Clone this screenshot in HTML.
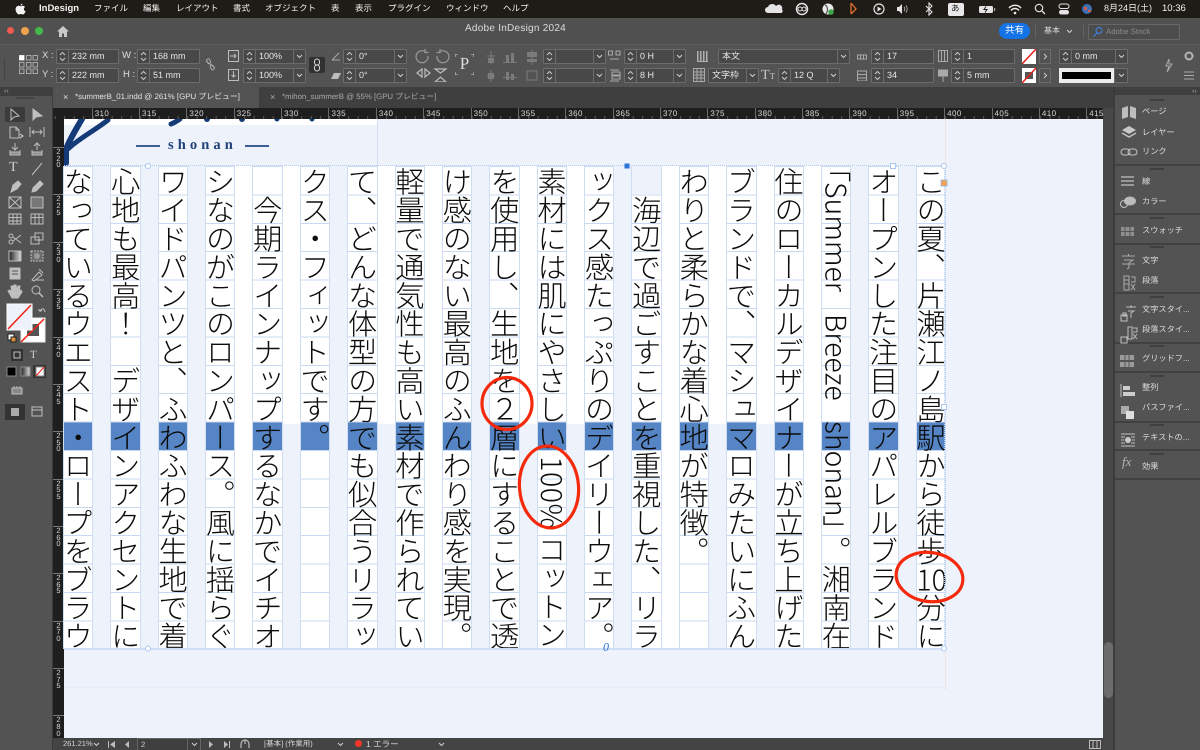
<!DOCTYPE html>
<html lang="ja"><head><meta charset="utf-8"><title>Adobe InDesign 2024</title>
<style>
html,body{margin:0;padding:0;width:1200px;height:750px;overflow:hidden;background:#535353}
body{position:relative;font-family:"Liberation Sans","Noto Sans CJK JP",sans-serif;color:#ddd;text-rendering:geometricPrecision}
.abs{position:absolute;white-space:nowrap}
#menu{position:absolute;left:0;top:0;width:1200px;height:18px;background:#1f1b17}
#menu span{position:absolute;top:0;line-height:17px;font-size:8.5px;color:#f1f1f1;white-space:nowrap}
#title{position:absolute;left:0;top:18px;width:1200px;height:26px;background:#505050}
#ctrl{position:absolute;left:0;top:44px;width:1200px;height:43px;background:#535353;border-top:1px solid #5e5e5e;box-sizing:border-box}
#tabs{position:absolute;left:0;top:87px;width:1200px;height:21px;background:#3f3f3f}
#tools{position:absolute;left:0;top:96px;width:52px;height:654px;background:#535353}
#rp{position:absolute;left:1115px;top:95px;width:85px;height:655px;background:#535353}
.f{position:absolute;height:13px;border:1px solid #6c6c6c;background:#484848;border-radius:1px;font-size:9px;line-height:13px;color:#e6e6e6;padding-left:15px;box-sizing:content-box;white-space:nowrap}
.f svg.st{position:absolute;left:0;top:0;width:11px;height:13px;border-right:1px solid #6c6c6c}
.f i{position:absolute;right:0;top:0;width:11px;height:13px;border-left:1px solid #6c6c6c}
.f i svg{position:absolute;left:2px;top:4px;width:7px;height:5px}
.lb{position:absolute;font-size:9.5px;color:#ddd;white-space:nowrap}
#rt{position:absolute;left:53px;top:108px;width:1050px;height:11px;background:#1e1e1e;overflow:hidden}
#rt .tk{position:absolute;left:0;bottom:0;width:100%;height:3px;background:repeating-linear-gradient(to right,#5a5a5a 0 1px,transparent 1px 9.474px);background-position:1.7px 0}
#rt .l{position:absolute;left:38.7px;top:0;display:flex;height:11px}
#rt .l span{flex:none;width:47.37px;box-sizing:border-box;border-left:1px solid #6a6a6a;font-size:8px;line-height:11px;padding-left:2px;color:#d8d8d8;letter-spacing:.4px}
#rl{position:absolute;left:53px;top:119px;width:11px;height:619px;background:#1e1e1e;overflow:hidden}
#rl b{position:absolute;left:0;width:11px;font-weight:400;font-size:7.5px;line-height:6.6px;color:#d8d8d8;text-align:center;border-top:1px solid #777;box-sizing:border-box;padding-top:1px}
#cv{position:absolute;left:64px;top:119px;width:1039px;height:619px;background:#eef2fb;overflow:hidden}
.g{position:absolute;background:#fff;width:19.2px}
.c{position:absolute;top:166px;width:28.4px;height:482.8px;box-sizing:border-box;writing-mode:vertical-rl;font-family:"Noto Sans CJK JP","Noto Sans CJK SC",sans-serif;font-weight:300;font-size:29.2px;letter-spacing:-.8px;line-height:28.4px;color:#0c0c0c;white-space:nowrap;padding-top:1px;
background:repeating-linear-gradient(to bottom,#c9d9f1 0 1px,transparent 1px 28.4px),linear-gradient(#5585c4,#5585c4) 0 255.6px/100% 28.4px no-repeat,#fff;
box-shadow:-1px 0 0 #cfddf3,1px 0 0 #cfddf3}
.c b{font-weight:inherit;text-combine-upright:all;font-size:28.4px;letter-spacing:0}
.c .w{position:absolute;left:0;font-size:28.4px;letter-spacing:0}
.c .x{position:absolute;left:0}
#rp .t{position:absolute;left:27px;font-size:8.2px;line-height:12px;color:#dcdcdc;white-space:nowrap}
#rp .s{position:absolute;left:0;width:85px;height:2px;background:#414141}
#rp .h{position:absolute;left:35px;width:14px;height:2px;background:#3f3f3f}
#st{position:absolute;left:53px;top:738px;width:1050px;height:12px;background:#444;font-size:7.5px;line-height:12px;color:#d6d6d6}
#st span{position:absolute;top:0;white-space:nowrap}
</style></head><body>
<svg width="0" height="0" style="position:absolute"><defs>
<symbol id="ss" viewBox="0 0 11 13"><path d="M3 5 L5.5 2.5 L8 5 M3 8 L5.5 10.5 L8 8" fill="none" stroke="#c8c8c8" stroke-width="1"/></symbol>
<symbol id="dd" viewBox="0 0 7 5"><path d="M1 1 L3.5 3.5 L6 1" fill="none" stroke="#d0d0d0" stroke-width="1"/></symbol>
</defs></svg>

<div id="menu">
<svg class="abs" style="left:15px;top:3px" width="11" height="12" viewBox="0 0 11 12"><path d="M7.5 0.5c0 1.200-1 2.200-2 2.200 0-1.200 1-2.100 2-2.200zM5.500 3.200c.8 0 1.300-.5 2.300-.5 1 0 1.800.5 2.300 1.200-1.900 1.100-1.500 3.700.5 4.400-.5 1.300-1.500 3.200-2.600 3.200-.8 0-1.100-.5-2.100-.5s-1.300.5-2.100.5C2.600 11.500.6 8.900.6 6.500.6 4 2.200 2.800 3.600 2.800c.8 0 1.400.4 1.900.4z" fill="#f2f2f2"/></svg>
<span style="left:39px;font-weight:700;font-size:9.5px">InDesign</span>
<span style="left:94px">ファイル</span><span style="left:143px">編集</span><span style="left:176px">レイアウト</span><span style="left:233px">書式</span><span style="left:265px">オブジェクト</span><span style="left:331px">表</span><span style="left:355px">表示</span><span style="left:388px">プラグイン</span><span style="left:446px">ウィンドウ</span><span style="left:503px">ヘルプ</span>
<svg class="abs" style="left:765px;top:2px" width="340" height="15" viewBox="765 2 340 15">
<path d="M768 13a3 3 0 0 1 0-6 4.500 4.500 0 0 1 8-1 3.500 3.500 0 0 1 6 3.500 2 2 0 0 1-1 3.500z" fill="#e4e4e4"/>
<circle cx="802" cy="9" r="5.500" fill="none" stroke="#e4e4e4" stroke-width="1.500"/><circle cx="800" cy="9" r="2" fill="none" stroke="#e4e4e4"/><circle cx="804" cy="9" r="2" fill="none" stroke="#e4e4e4"/>
<circle cx="828" cy="9" r="5.500" fill="#e8e8e8"/><path d="M825 5c3 1 3 6 1 9" stroke="#333" fill="none"/><circle cx="831" cy="12" r="2.800" fill="#3ea84a"/>
<path d="M851 3l5 6-5 5M851 3v11" stroke="#e0702a" fill="none" stroke-width="1.300"/>
<circle cx="879" cy="9" r="5" fill="none" stroke="#e4e4e4" stroke-width="1.200"/><path d="M877.500 6.500l4 2.500-4 2.500z" fill="#e4e4e4"/>
<path d="M897 7h2l3-3v10l-3-3h-2z" fill="#e4e4e4"/><path d="M904 7a3 3 0 0 1 0 4M906 5.500a6 6 0 0 1 0 7" stroke="#aaa" fill="none"/>
<path d="M926 6l6 6-3 3V3l3 3-6 6" stroke="#e4e4e4" fill="none" stroke-width="1.100"/>
<rect x="948" y="3" width="16" height="13" rx="2" fill="#e9e9e9"/>
<rect x="979" y="6" width="14" height="7" rx="1.500" fill="#e4e4e4"/><rect x="994" y="8" width="1.200" height="3" fill="#aaa"/><path d="M986 6.500l-2 3h3l-2 3" stroke="#222" fill="none"/>
<path d="M1009 8a8 8 0 0 1 12 0M1011 10.500a5 5 0 0 1 8 0" stroke="#eee" fill="none" stroke-width="1.400"/><circle cx="1015" cy="13" r="1.300" fill="#eee"/>
<circle cx="1039" cy="8" r="3.700" fill="none" stroke="#e4e4e4" stroke-width="1.200"/><path d="M1042 11l3 3" stroke="#e4e4e4" stroke-width="1.300"/>
<rect x="1059" y="4" width="10" height="4.500" rx="2.200" fill="none" stroke="#e4e4e4"/><rect x="1059" y="10" width="10" height="4.500" rx="2.200" fill="#e4e4e4"/>
<circle cx="1087" cy="9" r="5" fill="#3d6fb5"/><path d="M1084 7h3v3h-3zM1088 10h3v2h-3z" fill="#d25a4a"/>
</svg>
<span style="left:951px;top:0;font-size:8.5px;color:#222">あ</span>
<span style="left:1104px;font-size:9px">8月24日(土)</span><span style="left:1162px;font-size:9.5px">10:36</span>
</div>

<div id="title">
<div class="abs" style="left:7px;top:9px;width:7px;height:7px;border-radius:50%;background:#ee5a4f"></div>
<div class="abs" style="left:21px;top:9px;width:8px;height:8px;border-radius:50%;background:#f0a34c"></div>
<div class="abs" style="left:35px;top:9px;width:8px;height:8px;border-radius:50%;background:#46b84a"></div>
<svg class="abs" style="left:56px;top:7px" width="14" height="13" viewBox="0 0 14 13"><path d="M7 1L1 6.500h2V12h3V8.500h2V12h3V6.500h2z" fill="#c9c9c9"/></svg>
<div class="abs" style="left:465px;top:5px;font-size:10px;line-height:12px;color:#dcdcdc;letter-spacing:.25px">Adobe InDesign 2024</div>
<div class="abs" style="left:999px;top:5px;width:31px;height:16px;border-radius:8px;background:#1473e6;color:#fff;font-size:9.5px;line-height:16px;text-align:center">共有</div>
<div class="abs" style="left:1035px;top:6px;width:1px;height:14px;background:#626262"></div>
<div class="abs" style="left:1044px;top:6px;font-size:8px;line-height:14px;color:#d8d8d8">基本</div>
<svg class="abs" style="left:1066px;top:11px" width="7" height="5"><use href="#dd"/></svg>
<div class="abs" style="left:1083px;top:6px;width:1px;height:14px;background:#626262"></div>
<div class="abs" style="left:1088px;top:6px;width:92px;height:16px;border:1px solid #676767;background:#4c4c4c;border-radius:1px;font-size:7.8px;line-height:14px;color:#8c8c8c;padding-left:17px;box-sizing:border-box">Adobe Stock</div>
<svg class="abs" style="left:1092px;top:8px" width="12" height="12"><circle cx="7" cy="4.500" r="3" fill="none" stroke="#3d86e8"/><path d="M5 7L1.500 10.500" stroke="#3d86e8"/></svg>
</div>

<div id="ctrl"></div>
<div style="position:absolute;left:0;top:0;width:1200px;height:87px">
<svg class="abs" style="left:4px;top:58px" width="2" height="22"><rect width="1" height="22" fill="#444"/></svg>
<svg class="abs" style="left:19px;top:55px" width="19" height="19" viewBox="0 0 19 19" fill="none" stroke="#bdbdbd" stroke-width=".8"><rect x=".5" y=".5" width="4.500" height="4.500" fill="#fff" stroke="#fff"/><rect x="7.500" y=".5" width="4.500" height="4.500"/><rect x="14" y=".5" width="4.500" height="4.500"/><rect x=".5" y="7.500" width="4.500" height="4.500"/><rect x="7.500" y="7.500" width="4.500" height="4.500"/><rect x="14" y="7.500" width="4.500" height="4.500"/><rect x=".5" y="14" width="4.500" height="4.500"/><rect x="7.500" y="14" width="4.500" height="4.500"/><rect x="14" y="14" width="4.500" height="4.500"/></svg>
<div class="lb" style="left:42px;top:50px">X :</div><div class="lb" style="left:42px;top:69px">Y :</div>
<div class="f" style="left:56px;top:49px;width:46px"><svg class="st"><use href="#ss"/></svg>232 mm</div>
<div class="f" style="left:56px;top:68px;width:46px"><svg class="st"><use href="#ss"/></svg>222 mm</div>
<div class="lb" style="left:122px;top:50px">W :</div><div class="lb" style="left:123px;top:69px">H :</div>
<div class="f" style="left:137px;top:49px;width:46px"><svg class="st"><use href="#ss"/></svg>168 mm</div>
<div class="f" style="left:137px;top:68px;width:46px"><svg class="st"><use href="#ss"/></svg>51 mm</div>
<svg class="abs" style="left:205px;top:58px" width="11" height="13" fill="none" stroke="#aaa"><path d="M1 3l9 7"/><rect x="2" y="1" width="3" height="5" rx="1.500" transform="rotate(-25 3 3)"/><rect x="5.500" y="7" width="3" height="5" rx="1.500" transform="rotate(-25 7 9)"/></svg>
<svg class="abs" style="left:228px;top:50px" width="11" height="32" fill="none" stroke="#bdbdbd"><rect x=".5" y=".5" width="10" height="11"/><path d="M2 6h6M6 4l2 2-2 2"/><rect x=".5" y="19.500" width="10" height="11"/><path d="M5.500 21v6M3.500 25l2 2 2-2"/></svg>
<div class="f" style="left:243px;top:49px;width:46px"><svg class="st"><use href="#ss"/></svg>100%<i><svg><use href="#dd"/></svg></i></div>
<div class="f" style="left:243px;top:68px;width:46px"><svg class="st"><use href="#ss"/></svg>100%<i><svg><use href="#dd"/></svg></i></div>
<div class="abs" style="left:309px;top:57px;width:16px;height:16px;background:#313131;border-radius:2px"></div>
<svg class="abs" style="left:313px;top:58px" width="8" height="14" fill="none" stroke="#ddd"><rect x="1.500" y="1" width="5" height="6" rx="2.500"/><rect x="1.500" y="7" width="5" height="6" rx="2.500"/></svg>
<svg class="abs" style="left:331px;top:52px" width="10" height="28"><path d="M1 8L8 1M1 8h8" stroke="#aaa" fill="none"/><path d="M3 21h7l-3 6H0z" fill="#bdbdbd"/></svg>
<div class="f" style="left:343px;top:49px;width:47px"><svg class="st"><use href="#ss"/></svg>0°<i><svg><use href="#dd"/></svg></i></div>
<div class="f" style="left:343px;top:68px;width:47px"><svg class="st"><use href="#ss"/></svg>0°<i><svg><use href="#dd"/></svg></i></div>
<svg class="abs" style="left:414px;top:49px" width="36" height="33" fill="none" stroke="#9a9a9a" stroke-width="1.200"><path d="M14 7a6 6 0 1 1-3-4.500M11 0v3.500h3.500"/><path d="M23 7a6 6 0 1 0 3-4.500M26 0v3.500h-3.500"/><path d="M8 20l-5 4 5 4zM11 20l5 4-5 4z" stroke="#bdbdbd"/><path d="M21 20h11l-5.500 4zM21 33h11l-5.500-5z" stroke="#bdbdbd"/></svg>
<div class="abs" style="left:455px;top:54px;width:19px;height:20px;font-family:'Liberation Serif',serif;font-size:17px;line-height:20px;text-align:center;color:#ddd">P</div>
<svg class="abs" style="left:455px;top:54px" width="19" height="21" fill="none" stroke="#cfcfcf"><path d="M0 3V0h3M16 0h3v3M0 18v3h3M16 21h3v-3"/></svg>
<svg class="abs" style="left:486px;top:50px" width="52" height="32" fill="#7b7b7b"><path d="M5 1v13M1 6h8" stroke="#7b7b7b" fill="none"/><rect x="2" y="8" width="6" height="5"/><rect x="20" y="5" width="3" height="7"/><rect x="25" y="3" width="3" height="9"/><rect x="17" y="12" width="14" height="1"/><path d="M5 20v12M1 26h8" stroke="#7b7b7b" fill="none"/><rect x="2" y="23" width="6" height="6"/><rect x="20" y="22" width="3" height="8"/><rect x="25" y="24" width="3" height="6"/><rect x="17" y="27" width="14" height="1"/><rect x="41" y="2" width="10" height="5"/><rect x="41" y="9" width="10" height="3"/><path d="M46 0v15" stroke="#7b7b7b"/><rect x="41" y="21" width="10" height="9" fill="none" stroke="#7b7b7b"/></svg>
<div class="f" style="left:543px;top:49px;width:46px"><svg class="st"><use href="#ss"/></svg><i><svg><use href="#dd"/></svg></i></div>
<div class="f" style="left:543px;top:68px;width:46px"><svg class="st"><use href="#ss"/></svg><i><svg><use href="#dd"/></svg></i></div>
<svg class="abs" style="left:608px;top:50px" width="13" height="32" fill="none" stroke="#aaa"><rect x=".5" y="1" width="4" height="4"/><rect x="8" y="1" width="4" height="4"/><path d="M2 9h9"/><path d="M2 20h9M2 31h9"/><rect x="4" y="22" width="8" height="3"/><rect x="4" y="26" width="8" height="3"/></svg>
<div class="f" style="left:624px;top:49px;width:45px"><svg class="st"><use href="#ss"/></svg>0 H<i><svg><use href="#dd"/></svg></i></div>
<div class="f" style="left:624px;top:68px;width:45px"><svg class="st"><use href="#ss"/></svg>8 H<i><svg><use href="#dd"/></svg></i></div>
<svg class="abs" style="left:697px;top:50px" width="13" height="13" fill="#b0b0b0"><rect x="0" y="1" width="1.500" height="10"/><rect x="3" y="1" width="1.500" height="10"/><rect x="6" y="1" width="1.500" height="10"/><rect x="9" y="1" width="1.500" height="10"/><rect x="0" y="11" width="11" height="1"/></svg>
<div class="f" style="left:718px;top:49px;padding-left:3px;width:127px">本文<i><svg><use href="#dd"/></svg></i></div>
<svg class="abs" style="left:693px;top:68px" width="12" height="14" fill="none" stroke="#aaa"><rect x=".5" y=".5" width="11" height="13"/><path d="M.5 4h11M.5 7h11M.5 10h11M4 .5v13M8 .5v13"/></svg>
<div class="f" style="left:708px;top:68px;width:46px;padding-left:3px">文字枠<i><svg><use href="#dd"/></svg></i></div>
<div class="abs" style="left:761px;top:68px;font-family:'Liberation Serif',serif;font-size:14px;line-height:15px;color:#c8c8c8">T<span style="font-size:9px">T</span></div>
<div class="f" style="left:778px;top:68px;width:45px"><svg class="st"><use href="#ss"/></svg>12 Q<i><svg><use href="#dd"/></svg></i></div>
<svg class="abs" style="left:857px;top:52px" width="10" height="29" fill="none" stroke="#aaa"><rect x=".5" y="3" width="9" height="4"/><path d="M3.500 3v4M6.500 3v4"/><rect x=".5" y="19" width="9" height="10"/><path d="M.5 22.500h9M.5 26h9"/></svg>
<div class="f" style="left:871px;top:49px;width:46px"><svg class="st"><use href="#ss"/></svg>17</div>
<div class="f" style="left:871px;top:68px;width:46px"><svg class="st"><use href="#ss"/></svg>34</div>
<svg class="abs" style="left:938px;top:50px" width="10" height="33" fill="none" stroke="#aaa"><rect x=".5" y=".5" width="9" height="11"/><path d="M3.500 .5v11M6.500 .5v11"/><rect x=".5" y="20" width="9" height="6" fill="#aaa"/><path d="M5 26v6"/></svg>
<div class="f" style="left:951px;top:49px;width:47px"><svg class="st"><use href="#ss"/></svg>1</div>
<div class="f" style="left:951px;top:68px;width:47px"><svg class="st"><use href="#ss"/></svg>5 mm</div>
<svg class="abs" style="left:1022px;top:49px" width="14" height="34"><rect width="14" height="15" fill="#fff"/><path d="M0 15L14 0" stroke="#e8201a" stroke-width="1.500"/><rect y="19" width="14" height="15" fill="#fff"/><rect x="3" y="23" width="8" height="7" fill="#555"/><path d="M0 34L14 19" stroke="#e8201a" stroke-width="1.500"/></svg>
<svg class="abs" style="left:1039px;top:49px" width="12" height="34" fill="none"><rect x=".5" y=".5" width="11" height="14" stroke="#6c6c6c"/><path d="M5 5l2.500 2.500L5 10" stroke="#ccc"/><rect x=".5" y="19.500" width="11" height="14" stroke="#6c6c6c"/><path d="M5 24l2.500 2.500L5 29" stroke="#ccc"/></svg>
<div class="f" style="left:1059px;top:49px;width:52px"><svg class="st"><use href="#ss"/></svg>0 mm<i><svg><use href="#dd"/></svg></i></div>
<div class="abs" style="left:1059px;top:68px;width:55px;height:15px;background:#ececec"></div><div class="abs" style="left:1062px;top:72px;width:49px;height:7px;background:#000"></div>
<div class="f" style="left:1114px;top:68px;width:0;padding-left:12px"><i style="border-left:0"><svg><use href="#dd"/></svg></i></div>
<svg class="abs" style="left:1164px;top:58px" width="9" height="15"><path d="M5 1L2 8h3L3 14l5-8H5z" fill="none" stroke="#aaa"/></svg>
<svg class="abs" style="left:1183px;top:50px" width="12" height="32"><circle cx="6" cy="6" r="3.500" fill="none" stroke="#b5b5b5" stroke-width="2"/><path d="M1 22h10M1 25.500h10M1 29h10" stroke="#aaa"/></svg>
</div>

<div id="tabs">
<div class="abs" style="left:4px;top:0;font-size:7px;color:#aaa;line-height:9px">‹‹</div>
<div class="abs" style="left:53px;top:0;width:206px;height:21px;background:#535353"></div>
<div class="abs" style="left:63px;top:0;font-size:9px;line-height:20px;color:#ddd">×</div>
<div class="abs" style="left:75px;top:0;font-size:7.9px;line-height:20px;color:#e2e2e2">*summerB_01.indd @ 261% [GPU プレビュー]</div>
<div class="abs" style="left:270px;top:0;font-size:9px;line-height:20px;color:#aaa">×</div>
<div class="abs" style="left:282px;top:0;font-size:7.8px;line-height:20px;color:#a8a8a8">*mihon_summerB @ 55% [GPU プレビュー]</div>
<div class="abs" style="left:1192px;top:0;font-size:7px;color:#aaa;line-height:9px">‹‹</div>
</div>

<div id="tools"></div>
<svg class="abs" style="left:0;top:96px" width="52" height="340" viewBox="0 96 52 340" fill="none" stroke="#bfbfbf" stroke-width="1">
<rect x="16" y="97" width="18" height="2" fill="#444" stroke="none"/>
<rect x="5" y="107" width="20" height="15" rx="1" fill="#3b3b3b" stroke="none"/>
<path d="M11 109l0 11 3-3 5-1z"/><path d="M33 109v11l3-3 6-1z" fill="#bfbfbf"/>
<path d="M10 127h6l3 3v8h-9zM16 127v3h3"/><path d="M20 134l3 2-3 2" stroke="#ddd"/><path d="M30 127v10M44 127v10M32 132h10M34 130l-2 2 2 2M40 130l2 2-2 2"/>
<path d="M10 150v5h10v-5M15 143v7M12 147l3 3 3-3"/><rect x="10" y="152" width="10" height="3" fill="#8c8c8c"/><path d="M32 150v5h10v-5M37 150v-7M34 146l3-3 3 3"/><rect x="32" y="152" width="10" height="3" fill="#8c8c8c"/>
<path d="M32 175l10-12"/>
<path d="M11 192l2-7 5-4 3 3-4 5zM13 190l3-3" fill="#bfbfbf"/><path d="M32 192l1-4 7-7 3 3-7 7z" fill="#bfbfbf"/>
<rect x="9" y="197" width="12" height="11"/><path d="M9 197l12 11M21 197L9 208"/><rect x="31" y="197" width="12" height="11" fill="#777"/>
<rect x="9" y="214" width="12" height="10"/><path d="M9 217.500h12M9 221h12M13 214v10M17 214v10"/><rect x="31" y="214" width="12" height="10"/><path d="M35 214v10M39 214v10M31 217.500h12"/>
<circle cx="11" cy="242" r="2"/><circle cx="11" cy="236" r="2"/><path d="M13 241l8-6M13 237l8 6"/><rect x="31" y="237" width="8" height="7"/><rect x="35" y="233" width="8" height="7"/>
<defs><linearGradient id="gd"><stop stop-color="#222"/><stop offset="1" stop-color="#ddd"/></linearGradient></defs>
<rect x="9" y="251" width="12" height="10" fill="url(#gd)"/><rect x="31" y="251" width="12" height="10" fill="#6a6a6a" stroke-dasharray="2 1"/><circle cx="37" cy="256" r="3" fill="#999" stroke="none"/>
<rect x="10" y="268" width="10" height="11" fill="#bfbfbf"/><path d="M12 271h6M12 274h6" stroke="#555"/><path d="M32 280l7-8 3 3-8 6zM39 269l4 4"/><path d="M36 280h8"/>
<path d="M11 296l-3-5 2-1 2 2-1-6h2l1 4v-5h2l1 5 1-4h2l-1 6 2-2 1 2-4 6h-6z" fill="#bfbfbf"/><circle cx="36" cy="290" r="4"/><path d="M39 293l4 4" stroke-width="1.500"/>
<rect x="21" y="318" width="24" height="24" fill="#fff" stroke="#eee"/><rect x="27" y="324" width="12" height="12" fill="#555" stroke="none"/><path d="M21 342L44 319" stroke="#f01e14" stroke-width="1.500"/>
<rect x="7" y="304" width="25" height="26" fill="#eef2fb" stroke="#fff"/><path d="M8 329L31 305" stroke="#f01e14" stroke-width="1.500"/>
<path d="M40 311c2-3 4-3 5 1M38.500 309l1.500 2.500 2-1.500" stroke-width="1"/>
<rect x="8" y="334" width="6" height="6" fill="#fff" stroke="#222"/><rect x="11" y="337" width="5" height="5" fill="#d69040" stroke="#222"/>
<rect x="11" y="349" width="12" height="12" fill="#333" stroke="none"/><rect x="14" y="352" width="6" height="6"/>
<rect x="7" y="367" width="9" height="9" fill="#000" stroke="#888"/><rect x="21" y="367" width="9" height="9" fill="url(#gd)" stroke="#888"/><rect x="33" y="365" width="13" height="13" fill="#333" stroke="none"/><rect x="36" y="367" width="8" height="9" fill="#fff" stroke="#888"/><path d="M36 376l8-9" stroke="#f01e14"/>
<rect x="12" y="388" width="10" height="6" fill="#888"/><path d="M14 386v2M17 386v2M20 386v2"/>
<rect x="5" y="404" width="20" height="16" fill="#333" stroke="none"/><rect x="11" y="408" width="8" height="8" fill="#aaa" stroke="none"/>
<rect x="32" y="407" width="10" height="9"/><path d="M32 410h10"/>
</svg>
<div class="abs" style="left:9px;top:160px;font-family:'Liberation Serif',serif;font-size:14px;line-height:16px;color:#cfcfcf">T</div>
<div class="abs" style="left:30px;top:349px;font-family:'Liberation Serif',serif;font-size:11px;line-height:12px;color:#cfcfcf">T</div>

<div class="abs" style="left:52px;top:108px;width:1px;height:642px;background:#3a3a3a"></div>
<div class="abs" style="left:53px;top:108px;width:11px;height:11px;background:#1e1e1e"></div>
<div id="rt"><div class="tk"></div><div class="l"><span>310</span><span>315</span><span>320</span><span>325</span><span>330</span><span>335</span><span>340</span><span>345</span><span>350</span><span>355</span><span>360</span><span>365</span><span>370</span><span>375</span><span>380</span><span>385</span><span>390</span><span>395</span><span>400</span><span>405</span><span>410</span><span>415</span></div></div>
<div id="rl">
<b style="top:28px">2<br>2<br>0</b><b style="top:75.4px">2<br>2<br>5</b><b style="top:122.8px">2<br>3<br>0</b><b style="top:170.1px">2<br>3<br>5</b><b style="top:217.5px">2<br>4<br>0</b><b style="top:264.9px">2<br>4<br>5</b><b style="top:312.2px">2<br>5<br>0</b><b style="top:359.6px">2<br>5<br>5</b><b style="top:407px">2<br>6<br>0</b><b style="top:454.3px">2<br>6<br>5</b><b style="top:501.7px">2<br>7<br>0</b><b style="top:549px">2<br>7<br>5</b><b style="top:596.4px">2<br>8<br>0</b>
</div>

<div id="cv"></div>
<div class="abs" style="left:64px;top:119px;width:313px;height:6px;background:#fff"></div>
<div class="abs" style="left:377px;top:119px;width:1px;height:47px;background:#d5def0"></div>
<div class="abs" style="left:945px;top:119px;height:47px;border-left:1px dotted #f6cfc9"></div>
<div class="abs" style="left:945px;top:649px;height:40px;border-left:1px dotted #f6cfc9"></div>
<div class="abs" style="left:64px;top:687px;width:881px;border-top:1px dotted #dfe6f5"></div>
<svg class="abs" style="left:64px;top:119px" width="330" height="50" fill="none" stroke="#143a78">
<path d="M2 44V30C6 20 12 10 18 0" stroke-width="6" stroke-linecap="round"/>
<path d="M4 30C14 20 30 12 44 1" stroke-width="5" stroke-linecap="round"/>
<path d="M107 5C110 4 113 2 116 0" stroke-width="5" stroke-linecap="round"/>
<circle cx="143" cy="0" r="3" fill="#143a78" stroke="none"/><circle cx="178" cy="0" r="3" fill="#143a78" stroke="none"/><circle cx="213" cy="0" r="2.500" fill="#143a78" stroke="none"/><circle cx="248" cy="0" r="2.500" fill="#143a78" stroke="none"/>
</svg>
<div class="abs" style="left:136px;top:145px;width:24px;height:1.5px;background:#3c5d96"></div>
<div class="abs" style="left:245px;top:145px;width:24px;height:1.5px;background:#3c5d96"></div>
<div class="abs" style="left:168px;top:136px;font-family:'Liberation Serif',serif;font-weight:700;font-size:14.5px;line-height:18px;letter-spacing:4.1px;color:#1f4079">shonan</div>

<!-- white gutters -->
<div class="g" style="left:233.4px;top:166px;height:483px"></div>
<div class="g" style="left:280.8px;top:166px;height:258px"></div>
<div class="g" style="left:375.5px;top:166px;height:258px"></div>
<div class="g" style="left:422.9px;top:166px;height:483px"></div>
<div class="g" style="left:517.6px;top:166px;height:258px"></div>
<div class="g" style="left:565px;top:166px;height:258px"></div>
<div class="g" style="left:659.7px;top:166px;height:483px"></div>
<div class="g" style="left:707.1px;top:166px;height:258px"></div>
<div class="g" style="left:754.5px;top:166px;height:258px"></div>
<div class="g" style="left:801.8px;top:166px;height:483px"></div>

<!-- text columns, right to left in reading order -->
<div class="c" style="left:916.7px">この夏、片瀬江ノ島駅から徒歩<b>10</b>分に</div>
<div class="c" style="left:869.3px">オープンした注目のアパレルブランド</div>
<div class="c" style="left:821.9px"><span class="w" style="top:-12px">「</span><span class="w" style="top:16px">Summer</span><span class="w" style="top:148px">Breeze</span><span class="w" style="top:255px">shonan</span><span class="w" style="top:349px">」</span><span class="x" style="top:369.8px">。湘南在</span></div>
<div class="c" style="left:774.6px">住のローカルデザイナーが立ち上げた</div>
<div class="c" style="left:727.2px">ブランドで、マシュマロみたいにふん</div>
<div class="c" style="left:679.8px">わりと柔らかな着心地が特徴。</div>
<div class="c" style="left:632.4px;background:linear-gradient(#eef2fb,#eef2fb) 0 0/100% 28.4px no-repeat,repeating-linear-gradient(to bottom,#c9d9f1 0 1px,transparent 1px 28.4px),linear-gradient(#5585c4,#5585c4) 0 255.6px/100% 28.4px no-repeat,#fff">　海辺で過ごすことを重視した、リラ</div>
<div class="c" style="left:585.1px">ックス感たっぷりのデイリーウェア。</div>
<div class="c" style="left:537.7px">素材には肌にやさしい<span style="padding-inline:5.2px;letter-spacing:.6px;font-size:28.4px">100%</span>コットン</div>
<div class="c" style="left:490.3px">を使用し、生地を２層にすることで透</div>
<div class="c" style="left:442.9px">け感のない最高のふんわり感を実現。</div>
<div class="c" style="left:395.6px">軽量で通気性も高い素材で作られてい</div>
<div class="c" style="left:348.2px">て、どんな体型の方でも似合うリラッ</div>
<div class="c" style="left:300.8px">クス・フィットです。</div>
<div class="c" style="left:253.4px">　今期ラインナップするなかでイチオ</div>
<div class="c" style="left:206.1px">シなのがこのロンパース。風に揺らぐ</div>
<div class="c" style="left:158.7px">ワイドパンツと、ふわふわな生地で着</div>
<div class="c" style="left:111.3px">心地も最高！　デザインアクセントに</div>
<div class="c" style="left:63.9px">なっているウエスト・ロープをブラウ</div>

<!-- frame & handles -->
<div class="abs" style="left:64px;top:165px;width:881px;height:484px;border:1px dotted #b5cdf0;box-sizing:border-box;border-left:0"></div>
<div class="abs" style="left:64px;top:648px;width:881px;height:1.5px;background:#cfdff6"></div>
<svg class="abs" style="left:140px;top:158px" width="840" height="500" viewBox="140 158 840 500">
<g fill="#fff" stroke="#a9c7ef"><circle cx="148" cy="166" r="2.500"/><circle cx="944" cy="166" r="2.500"/><circle cx="148" cy="648.500" r="2.500"/><circle cx="944" cy="648.500" r="2.500"/><rect x="890.500" y="163.500" width="5" height="5"/><rect x="941.500" y="404.500" width="5" height="5"/></g>
<rect x="624.500" y="163.500" width="5" height="5" fill="#2a76d8"/>
<rect x="941" y="180" width="6" height="6" fill="#f5a14f" stroke="#8fb3e6" stroke-width=".8"/>
<g fill="none" stroke="#f52a0c" stroke-width="3.200">
<ellipse cx="507" cy="403.500" rx="25" ry="26"/>
<ellipse cx="549" cy="487" rx="29.500" ry="41" transform="rotate(-5 549 487)"/>
<ellipse cx="929.500" cy="577" rx="33.500" ry="24.500" transform="rotate(8 929.500 577)"/>
</g></svg>
<div class="abs" style="left:603px;top:640px;font-family:'Liberation Serif',serif;font-style:italic;font-size:12px;line-height:14px;color:#2a76d8">0</div>

<!-- scrollbar etc -->
<div class="abs" style="left:1103px;top:108px;width:10px;height:642px;background:#484848"></div>
<div class="abs" style="left:1103.5px;top:642px;width:9px;height:56px;border-radius:4.5px;background:#6c6c6c"></div>
<div class="abs" style="left:1113px;top:87px;width:2px;height:663px;background:#3c3c3c"></div>

<div id="st">
<span style="left:10px">261.21%</span>
<svg class="abs" style="left:40px;top:4px" width="7" height="5"><use href="#dd"/></svg>
<svg class="abs" style="left:52px;top:2px" width="30" height="9" fill="#bcbcbd"><path d="M3 1h1v7H3zM10 1v7L5 4.500zM24 1v7l-4-3.500z"/></svg>
<div class="abs" style="left:84px;top:0;width:59px;height:11px;border:1px solid #666;background:#3f3f3f;line-height:11px;padding-left:3px;box-sizing:content-box">2<i style="position:absolute;right:0;top:0;width:12px;height:11px;border-left:1px solid #666"><svg style="position:absolute;left:3px;top:3px;width:7px;height:5px"><use href="#dd"/></svg></i></div>
<svg class="abs" style="left:155px;top:2px" width="25" height="9" fill="#bcbcbd"><path d="M1 1v7l4-3.500zM16 1v7l4-3.500zM21 1h1v7h-1z"/></svg>
<svg class="abs" style="left:187px;top:1px" width="11" height="11" fill="none" stroke="#bcbcbd" stroke-width="1.200"><path d="M1 9V5a4 4 0 0 1 8 0v4"/><path d="M5 1v4"/></svg>
<span style="left:211px">[基本] (作業用)</span>
<svg class="abs" style="left:284px;top:4px" width="7" height="5"><use href="#dd"/></svg>
<div class="abs" style="left:301.5px;top:2px;width:7px;height:7px;border-radius:50%;background:#f0372a"></div>
<span style="left:313px;font-size:8.5px">1 エラー</span>
<svg class="abs" style="left:385px;top:4px" width="7" height="5"><use href="#dd"/></svg>
<svg class="abs" style="left:1036px;top:2px" width="12" height="9" fill="none" stroke="#bbb"><rect x=".5" y=".5" width="11" height="8"/><path d="M4 .5v8M8 .5v8"/></svg>
</div>

<div id="rp">
<div class="s" style="top:69px"></div><div class="s" style="top:118px"></div><div class="s" style="top:148px"></div><div class="s" style="top:197px"></div><div class="s" style="top:247px"></div><div class="s" style="top:276px"></div><div class="s" style="top:326px"></div><div class="s" style="top:354px"></div><div class="s" style="top:383px"></div>
<div class="h" style="top:4px"></div><div class="h" style="top:73px"></div><div class="h" style="top:122px"></div><div class="h" style="top:151px"></div><div class="h" style="top:201px"></div><div class="h" style="top:250px"></div><div class="h" style="top:280px"></div><div class="h" style="top:329px"></div><div class="h" style="top:358px"></div>
<div class="t" style="top:11px">ページ</div><div class="t" style="top:32px">レイヤー</div><div class="t" style="top:51px">リンク</div>
<div class="t" style="top:81px">線</div><div class="t" style="top:101px">カラー</div>
<div class="t" style="top:130px">スウォッチ</div>
<div class="t" style="top:160px">文字</div><div class="t" style="top:180px">段落</div>
<div class="t" style="top:209px">文字スタイ...</div><div class="t" style="top:229px">段落スタイ...</div>
<div class="t" style="top:258px">グリッドフ...</div>
<div class="t" style="top:287px">整列</div><div class="t" style="top:307px">パスファイ...</div>
<div class="t" style="top:337px">テキストの...</div>
<div class="t" style="top:366px">効果</div>
<svg class="abs" style="left:5px;top:8px" width="20" height="372" fill="none" stroke="#c2c2c2">
<path d="M2 5l6-2v11l-6 2zM10 3l6 2v11l-6-2z" fill="#bdbdbd" stroke="none"/>
<path d="M9 23l7 4-7 4-7-4z" fill="#c8c8c8" stroke="none"/><path d="M2 30l7 4 7-4" stroke-width="1.500"/>
<rect x="1" y="46" width="9" height="6" rx="3"/><rect x="8" y="46" width="9" height="6" rx="3"/>
<path d="M1 74h13M1 78h13M1 82h13" stroke-width="1.300"/>
<ellipse cx="10" cy="98" rx="6" ry="4.500" fill="#bbb" stroke="none"/><circle cx="4" cy="101" r="3.500"/>
<rect x="1" y="124" width="13" height="9" fill="#8e8e8e" stroke="none"/><path d="M5 124v9M10 124v9M1 128.500h13" stroke="#555"/>
<path d="M2 153h13M8.500 151v2M4 157h9l-4 3v5l-2 1M2 161h13" stroke="#aaa"/>
<path d="M4 173h5v14H4zM4 177h5M4 181h5M11 174h4v5h-4M11 181l4 6M15 181l-4 6" stroke="#aaa"/>
<path d="M6 204h10M11 202v3M8 208h6l-3 2v5" stroke="#bbb"/><rect x="1" y="212" width="6" height="6"/><rect x="3" y="210" width="3" height="3"/>
<path d="M8 224h4v12H8zM13 225h4v4h-4M13 231l4 5M17 231l-4 5" stroke="#bbb"/><rect x="1" y="234" width="6" height="6"/>
<rect x="0" y="252" width="14" height="5" fill="#9a9a9a" stroke="none"/><rect x="0" y="259" width="14" height="5" fill="#9a9a9a" stroke="none"/><path d="M5 252v12M9 252v12" stroke="#555"/>
<path d="M1 281v13"/><rect x="3" y="283" width="7" height="4" fill="#ccc" stroke="none"/><rect x="3" y="289" width="12" height="4" fill="#ccc" stroke="none"/>
<rect x="1" y="303" width="8" height="8" fill="#aaa" stroke="none"/><rect x="6" y="308" width="8" height="8" fill="#ddd" stroke="none"/>
<path d="M1 331h14M1 343h14M1 334h4M11 334h4M1 337h3M12 337h3M1 340h4M11 340h4"/><circle cx="8" cy="337" r="3" fill="#ccc" stroke="none"/>
</svg>
<div class="abs" style="left:7px;top:360px;font-family:'Liberation Serif',serif;font-style:italic;font-size:13px;line-height:14px;color:#b5b5b5">fx</div>
</div>
</body></html>
